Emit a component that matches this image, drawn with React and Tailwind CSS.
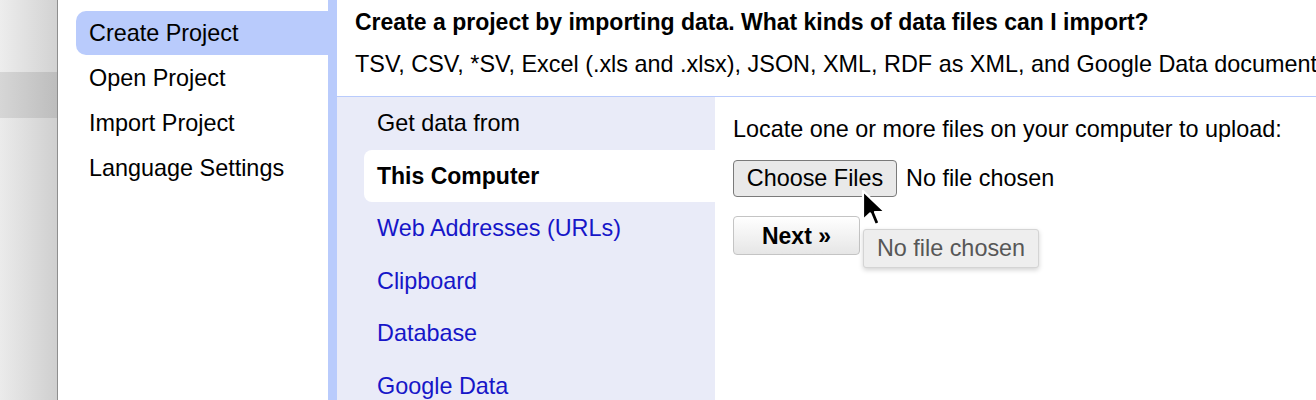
export default function App() {
  const sources = ["Web Addresses (URLs)", "Clipboard", "Database", "Google Data"];

  return (
    <div
      className="flex h-[400px] w-[1316px] overflow-hidden bg-white text-[23.4px] text-black"
      style={{ fontFamily: '"Liberation Sans", Arial, sans-serif' }}
    >
      {/* desktop edge */}
      <div className="flex w-[58px] shrink-0 flex-col border-r border-[#8e8e8e]">
        <div className="h-[72px] bg-gradient-to-r from-[#ededed] to-[#d2d2d2]" />
        <div className="h-[46px] bg-gradient-to-r from-[#d6d6d6] to-[#bdbdbd]" />
        <div className="flex-1 bg-gradient-to-r from-[#ebebeb] to-[#cfcfcf]" />
      </div>

      {/* left nav */}
      <div className="w-[270px] shrink-0 pl-[18px] pt-[11px]">
        <div className="flex h-[44px] items-center rounded-l-[10px] bg-[#b9cbfc] pl-[13px] pt-[2px]">
          Create Project
        </div>
        <div className="flex h-[45px] items-center pl-[13px] pt-[2px]">Open Project</div>
        <div className="flex h-[45px] items-center pl-[13px] pt-[2px]">Import Project</div>
        <div className="flex h-[45px] items-center pl-[13px] pt-[2px]">Language Settings</div>
      </div>
      <div className="w-[9px] shrink-0 bg-[#b9cbfc]" />

      {/* main */}
      <div className="flex min-w-0 flex-1 flex-col">
        <div className="h-[97px] shrink-0 overflow-hidden whitespace-nowrap border-b border-[#b9cbfc] pl-[18px] pt-[8px]">
          <div className="text-[23px] font-bold leading-[28px]">
            Create a project by importing data. What kinds of data files can I import?
          </div>
          <div className="mt-[14px] leading-[28px]">
            TSV, CSV, *SV, Excel (.xls and .xlsx), JSON, XML, RDF as XML, and Google Data documents
          </div>
        </div>

        <div className="flex flex-1">
          <div className="w-[378px] shrink-0 bg-[#e9ebf8] pl-[27px]">
            <div className="flex h-[53px] items-center pl-[13px]">Get data from</div>
            <div className="flex h-[52px] items-center rounded-l-[8px] bg-white pl-[13px] text-[23px] font-bold">
              This Computer
            </div>
            {sources.map((s) => (
              <div key={s} className="flex h-[52.5px] items-center pl-[13px] pt-[1px] text-[#1616c8]">
                {s}
              </div>
            ))}
          </div>

          <div className="relative flex-1 pl-[18px] pt-[18px]">
            <div className="leading-[28px]">Locate one or more files on your computer to upload:</div>
            <div className="mt-[17px] flex items-center">
              <div className="flex h-[37px] w-[164px] items-center justify-center rounded-[4px] border border-[#7a7a7a] bg-[#e9e9e9]">
                Choose Files
              </div>
              <span className="ml-[9px]">No file chosen</span>
            </div>
            <div className="mt-[19px] flex h-[39px] w-[127px] items-center justify-center rounded-[4px] border border-[#c4c4c4] bg-gradient-to-b from-white to-[#e6e6e6] pt-[1px] text-[23px] font-bold">
              Next »
            </div>

            {/* tooltip */}
            <div className="absolute left-[148px] top-[132px] flex h-[39px] w-[176px] items-center justify-center rounded-[3px] border border-[#d4d4d4] bg-[#eeeeee] text-[#575757] shadow-[0_2px_5px_rgba(0,0,0,0.18)]">
              No file chosen
            </div>

            {/* mouse cursor */}
            <svg
              className="absolute left-[146px] top-[92px]"
              width="28"
              height="40"
              viewBox="0 0 14 20"
            >
              <path
                d="M1 1 L1 15.5 L4.6 12.2 L7 18 L9.3 17 L7 11.5 L12 11.5 Z"
                fill="#000"
                stroke="#fff"
                strokeWidth="1.1"
                strokeLinejoin="round"
              />
            </svg>
          </div>
        </div>
      </div>
    </div>
  );
}
